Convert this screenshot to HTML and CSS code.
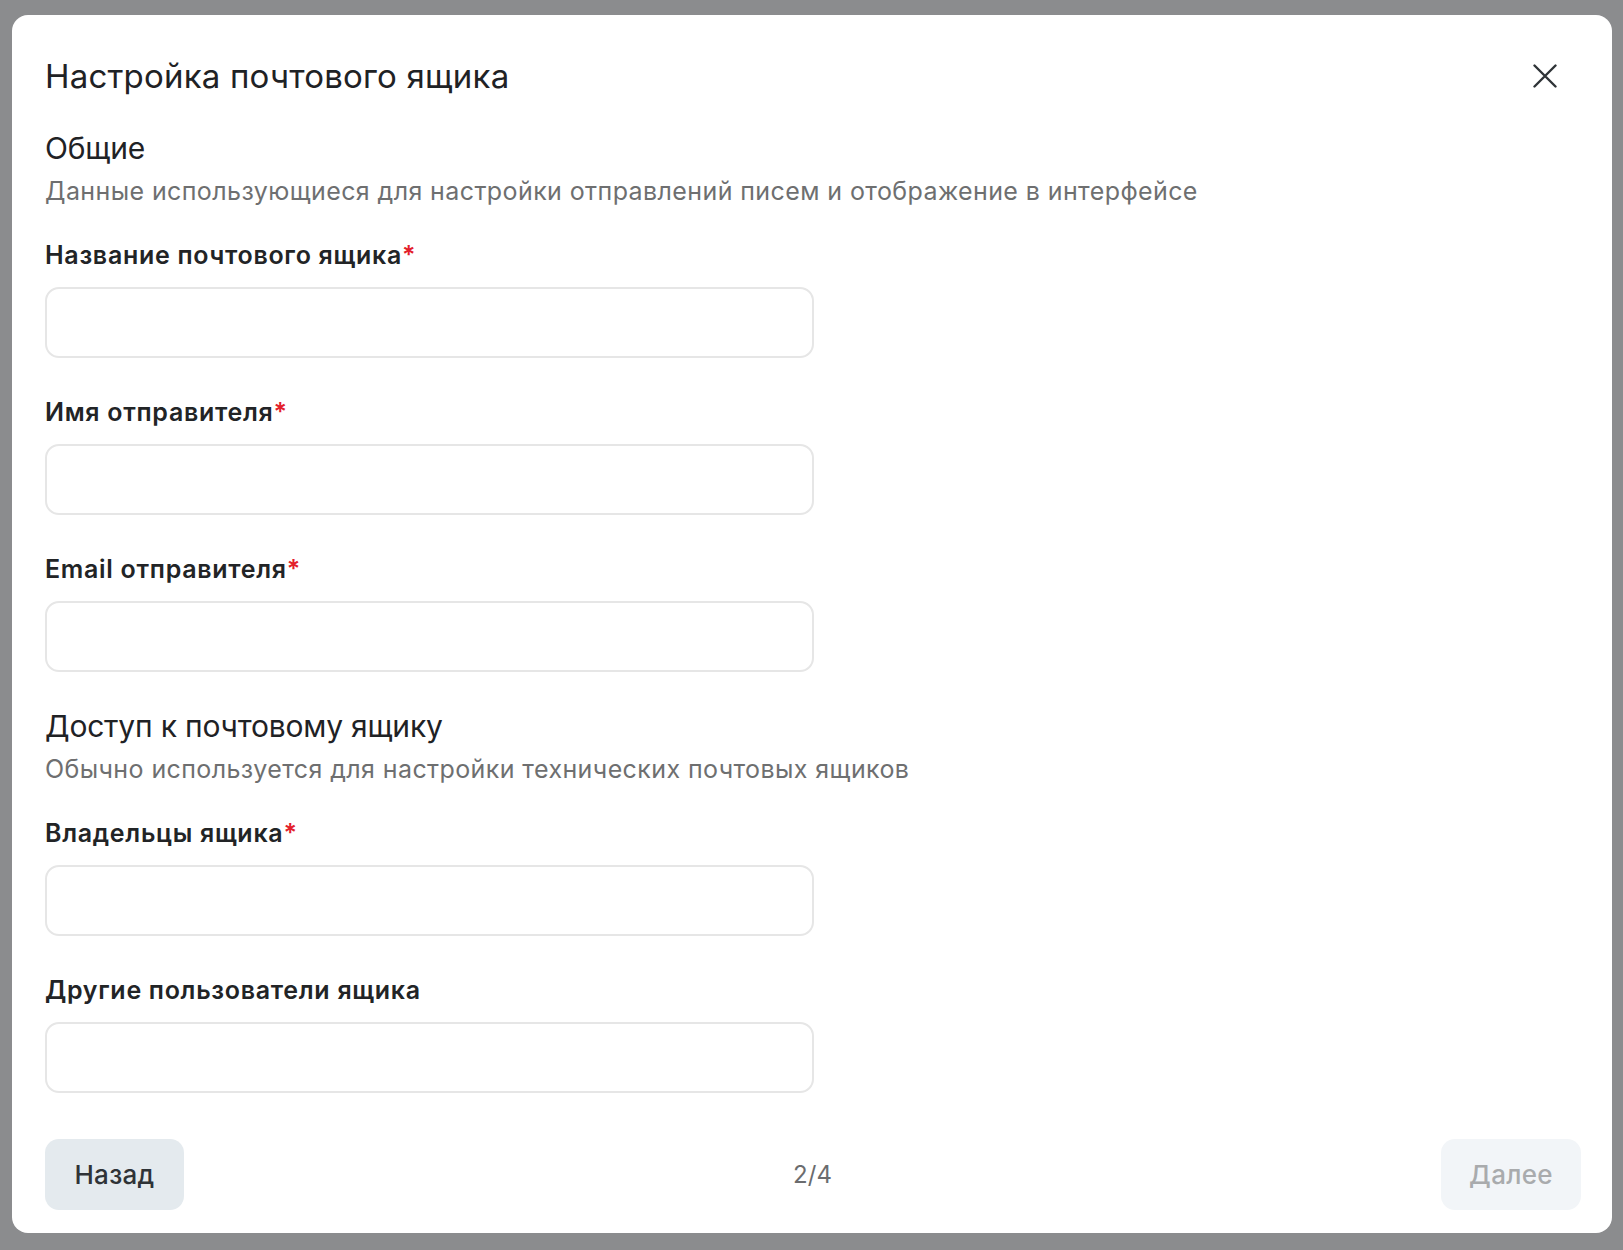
FILE: index.html
```html
<!DOCTYPE html>
<html lang="ru">
<head>
    <meta charset="UTF-8">
    <meta name="viewport" content="width=device-width, initial-scale=1.0">
    <title>Настройка почтового ящика</title>
    <link rel="stylesheet" href="styles.css">
</head>
<body>

    <div class="modal">
        <div class="modal-head">
            <h1 class="modal-title">Настройка почтового ящика</h1>
            <button class="close-btn" aria-label="Закрыть">
                <svg width="24" height="24" viewBox="0 0 24 24" fill="none" stroke="#2f3337" stroke-width="2.4" stroke-linecap="round">
                    <path d="M1.5 1.5 L22.5 22.5 M22.5 1.5 L1.5 22.5"/>
                </svg>
            </button>
        </div>

        <div class="modal-body">
            <section class="section">
                <h2>Общие</h2>
                <p class="section-desc">Данные использующиеся для настройки отправлений писем и отображение в интерфейсе</p>

                <div class="fields">
                    <div class="field">
                        <label>Название почтового ящика<span class="req">*</span></label>
                        <input type="text" class="input">
                    </div>
                    <div class="field">
                        <label>Имя отправителя<span class="req">*</span></label>
                        <input type="text" class="input">
                    </div>
                    <div class="field">
                        <label>Email отправителя<span class="req">*</span></label>
                        <input type="text" class="input">
                    </div>
                </div>
            </section>

            <section class="section">
                <h2>Доступ к почтовому ящику</h2>
                <p class="section-desc">Обычно используется для настройки технических почтовых ящиков</p>

                <div class="fields">
                    <div class="field">
                        <label>Владельцы ящика<span class="req">*</span></label>
                        <input type="text" class="input">
                    </div>
                    <div class="field">
                        <label>Другие пользователи ящика</label>
                        <input type="text" class="input">
                    </div>
                </div>
            </section>
        </div>

        <div class="modal-foot">
            <button class="btn btn-back">Назад</button>
            <span class="step">2/4</span>
            <button class="btn btn-next" disabled>Далее</button>
        </div>
    </div>

</body>
</html>
```

FILE: styles.css
```css
* {
    margin: 0;
    padding: 0;
    box-sizing: border-box;
    font-family: "Inter", "Noto Sans", sans-serif;
}

body {
    background: #8b8c8e;
    min-height: 100vh;
    padding: 15px 0 0 12px;
}

.modal {
    width: 1600px;
    height: 1218px;
    background: #fff;
    border-radius: 16px;
    padding: 43px 31px 23px 33px;
    display: flex;
    flex-direction: column;
}

.modal-head {
    display: flex;
    justify-content: space-between;
    align-items: center;
    padding-right: 24px;
}

.modal-title {
    font-size: 33px;
    line-height: 36px;
    font-weight: 400;
    letter-spacing: 0.2px;
    color: #1f2225;
}

.close-btn {
    width: 24px;
    height: 24px;
    border: none;
    background: none;
    cursor: pointer;
    display: flex;
}

.modal-body {
    margin-top: 38px;
}

.section + .section {
    margin-top: 38px;
}

.section h2 {
    font-size: 30px;
    line-height: 32px;
    font-weight: 400;
    letter-spacing: -0.2px;
    color: #1f2225;
}

.section-desc {
    margin-top: 13px;
    font-size: 25px;
    line-height: 28px;
    letter-spacing: 0.4px;
    color: #6e6f70;
}

.fields {
    margin-top: 36px;
}

.field + .field {
    margin-top: 40px;
}

.field label {
    display: block;
    font-size: 25px;
    line-height: 28px;
    font-weight: 600;
    letter-spacing: 0.7px;
    color: #222426;
    margin-bottom: 18px;
}

.req {
    color: #e3202b;
}

.input {
    display: block;
    width: 769px;
    height: 71px;
    border: 2px solid #e6e6e6;
    border-radius: 14px;
    background: #fff;
    padding: 0 18px;
    font-size: 22px;
    outline: none;
}

.modal-foot {
    margin-top: auto;
    display: flex;
    justify-content: space-between;
    align-items: center;
}

.btn {
    width: 139px;
    height: 71px;
    border: none;
    border-radius: 14px;
    font-size: 26px;
    font-weight: 500;
    letter-spacing: 0.3px;
    cursor: pointer;
}

.btn-back {
    background: #e4eaee;
    color: #2f3337;
}

.btn-next {
    width: 140px;
    background: #f2f5f8;
    color: #a9abad;
    cursor: default;
}

.step {
    font-size: 24px;
    color: #6b6c6e;
}
```
